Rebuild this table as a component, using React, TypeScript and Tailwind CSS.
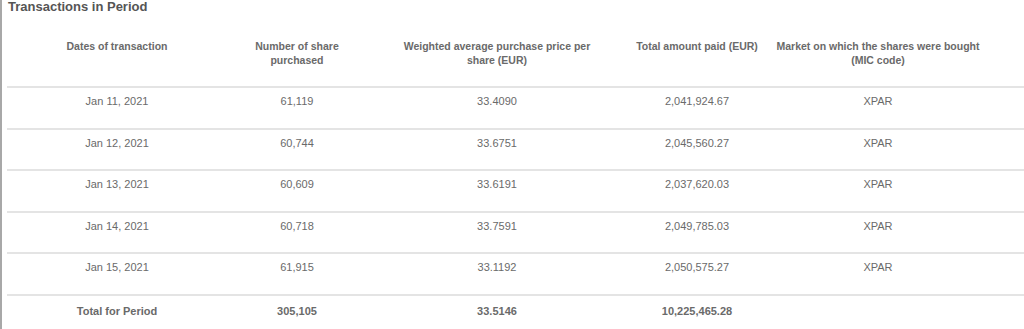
const rows = [
  { date: 'Jan 11, 2021', shares: '61,119', price: '33.4090', total: '2,041,924.67', mic: 'XPAR' },
  { date: 'Jan 12, 2021', shares: '60,744', price: '33.6751', total: '2,045,560.27', mic: 'XPAR' },
  { date: 'Jan 13, 2021', shares: '60,609', price: '33.6191', total: '2,037,620.03', mic: 'XPAR' },
  { date: 'Jan 14, 2021', shares: '60,718', price: '33.7591', total: '2,049,785.03', mic: 'XPAR' },
  { date: 'Jan 15, 2021', shares: '61,915', price: '33.1192', total: '2,050,575.27', mic: 'XPAR' },
];

export default function App() {
  return (
    <div className="h-[329px] w-[1024px] overflow-hidden bg-white font-['Liberation_Sans',Arial,sans-serif]">
      <div className="h-full border-l-2 border-[#a8a8a8] pl-[5px]">
        <h2 className="pl-[1px] text-[13px] font-bold leading-[13px] text-[#555]">Transactions in Period</h2>

        <table className="w-full table-fixed border-collapse text-center text-[11px] leading-[14px] text-[#6a6a6a]">
          <colgroup>
            <col className="w-[220px]" />
            <col className="w-[140px]" />
            <col className="w-[260px]" />
            <col className="w-[140px]" />
            <col className="w-[222px]" />
            <col />
          </colgroup>
          <thead>
            <tr className="align-top text-[10.5px]">
              <th className="pt-[26px] pb-[19px] font-bold">Dates of transaction</th>
              <th className="px-6 pt-[26px] pb-[19px] font-bold">Number of share purchased</th>
              <th className="px-8 pt-[26px] pb-[19px] font-bold">Weighted average purchase price per share (EUR)</th>
              <th className="pt-[26px] pb-[19px] font-bold">Total amount paid (EUR)</th>
              <th className="pt-[26px] pb-[19px] font-bold">Market on which the shares were bought (MIC code)</th>
              <th />
            </tr>
          </thead>
          <tbody>
            {rows.map((r) => (
              <tr key={r.date} className="h-[41.6px] border-t-2 border-[#e4e4e4] align-top">
                <td className="pt-[6px]">{r.date}</td>
                <td className="pt-[6px]">{r.shares}</td>
                <td className="pt-[6px]">{r.price}</td>
                <td className="pt-[6px]">{r.total}</td>
                <td className="pt-[6px]">{r.mic}</td>
                <td />
              </tr>
            ))}
            <tr className="border-t-2 border-[#e4e4e4] align-top font-bold">
              <td className="pt-[8px]">Total for Period</td>
              <td className="pt-[8px]">305,105</td>
              <td className="pt-[8px]">33.5146</td>
              <td className="pt-[8px]">10,225,465.28</td>
              <td className="pt-[8px]" />
              <td />
            </tr>
          </tbody>
        </table>
      </div>
    </div>
  );
}
